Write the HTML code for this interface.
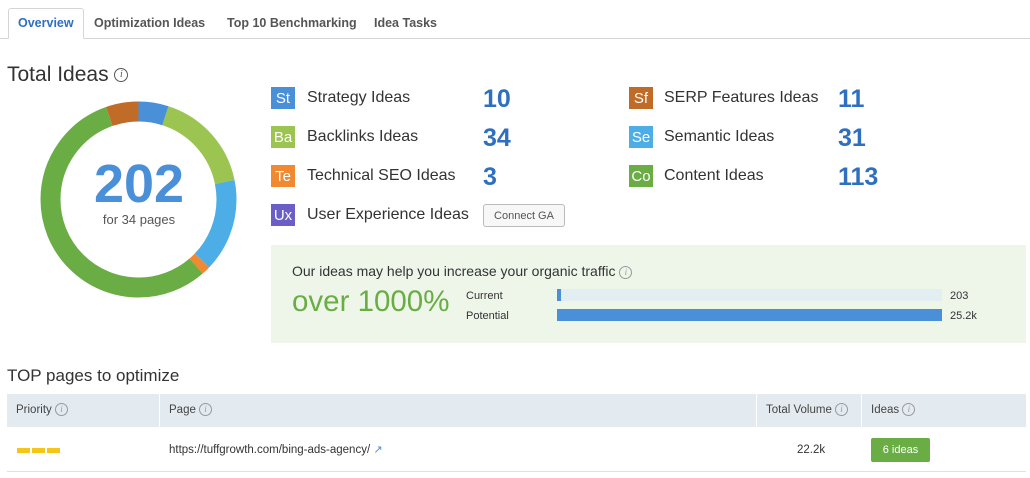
<!DOCTYPE html>
<html><head><meta charset="utf-8"><style>
*{margin:0;padding:0;box-sizing:border-box}
body{width:1030px;height:478px;background:#fff;font-family:"Liberation Sans","DejaVu Sans",sans-serif;color:#333;position:relative;overflow:hidden}
.a{position:absolute;white-space:nowrap}
.tab{position:absolute;top:8px;height:31px;line-height:30px;font-size:12.5px;color:#555;font-weight:bold}
.b{position:absolute;width:24px;height:22px;color:#fff;font-size:15px;line-height:23px;text-align:center}
.l{position:absolute;font-size:16px;color:#333;line-height:22px}
.n{position:absolute;font-size:25px;color:#2f6fc0;font-weight:bold;line-height:22px}
.i{display:inline-block;width:13px;height:13px;border:1px solid #999;border-radius:50%;font-size:9px;line-height:11px;text-align:center;color:#999;font-style:italic;font-family:"Liberation Serif",serif;vertical-align:middle}
.th{position:absolute;top:394px;height:33px;background:#e4ebf0;font-size:11.5px;color:#444;line-height:33px;padding-left:9px}
</style></head><body>
<div class="a" style="left:0;top:38px;width:1030px;height:1px;background:#d5d5d5"></div>
<div class="a" style="left:8px;top:8px;width:76px;height:31px;border:1px solid #d5d5d5;border-bottom:1px solid #fff;background:#fff;border-radius:3px 3px 0 0"></div>
<div class="tab" style="left:18px;color:#2f6fc0">Overview</div>
<div class="tab" style="left:94px">Optimization Ideas</div>
<div class="tab" style="left:227px">Top 10 Benchmarking</div>
<div class="tab" style="left:374px">Idea Tasks</div>

<div class="a" style="left:7px;top:63px;font-size:21px;color:#333">Total Ideas <span class="i" style="width:14px;height:14px;font-size:10px;line-height:12px;border-color:#555;color:#555">i</span></div>

<svg class="a" style="left:0;top:0" width="260" height="310">
<g transform="rotate(-90 138.5 199.5)" fill="none" stroke-width="20">
<circle cx="138.5" cy="199.5" r="88" stroke="#4a90d9" stroke-dasharray="27.4 600" stroke-dashoffset="0"/>
<circle cx="138.5" cy="199.5" r="88" stroke="#9bc550" stroke-dasharray="93.1 600" stroke-dashoffset="-27.4"/>
<circle cx="138.5" cy="199.5" r="88" stroke="#4dade6" stroke-dasharray="84.9 600" stroke-dashoffset="-120.5"/>
<circle cx="138.5" cy="199.5" r="88" stroke="#f0892f" stroke-dasharray="8.2 600" stroke-dashoffset="-205.4"/>
<circle cx="138.5" cy="199.5" r="88" stroke="#6aad45" stroke-dasharray="309.3 600" stroke-dashoffset="-213.6"/>
<circle cx="138.5" cy="199.5" r="88" stroke="#c06c28" stroke-dasharray="30.1 600" stroke-dashoffset="-522.9"/>
</g></svg>
<div class="a" style="left:88px;top:154px;width:102px;text-align:center;font-size:54px;color:#4a90d9;font-weight:bold;line-height:60px">202</div>
<div class="a" style="left:88px;top:212px;width:102px;text-align:center;font-size:13px;color:#555">for 34 pages</div>

<div class="b" style="left:271px;top:87px;background:#4a90d9">St</div><div class="l" style="left:307px;top:87px">Strategy Ideas</div><div class="n" style="left:483px;top:88px">10</div>
<div class="b" style="left:271px;top:126px;background:#9bc550">Ba</div><div class="l" style="left:307px;top:126px">Backlinks Ideas</div><div class="n" style="left:483px;top:127px">34</div>
<div class="b" style="left:271px;top:165px;background:#f0892f">Te</div><div class="l" style="left:307px;top:165px">Technical SEO Ideas</div><div class="n" style="left:483px;top:166px">3</div>
<div class="b" style="left:271px;top:204px;background:#6b5fc7">Ux</div><div class="l" style="left:307px;top:204px">User Experience Ideas</div>
<div class="a" style="left:483px;top:204px;width:82px;height:23px;border:1px solid #bbb;border-radius:3px;background:#f7f7f7;font-size:11px;color:#555;text-align:center;line-height:22px">Connect GA</div>
<div class="b" style="left:629px;top:87px;background:#c06c28">Sf</div><div class="l" style="left:664px;top:87px">SERP Features Ideas</div><div class="n" style="left:838px;top:88px">11</div>
<div class="b" style="left:629px;top:126px;background:#4dade6">Se</div><div class="l" style="left:664px;top:126px">Semantic Ideas</div><div class="n" style="left:838px;top:127px">31</div>
<div class="b" style="left:629px;top:165px;background:#6aad45">Co</div><div class="l" style="left:664px;top:165px">Content Ideas</div><div class="n" style="left:838px;top:166px">113</div>

<div class="a" style="left:271px;top:245px;width:755px;height:98px;background:#eef6ea"></div>
<div class="a" style="left:292px;top:263px;font-size:14px;color:#333">Our ideas may help you increase your organic traffic <span class="i">i</span></div>
<div class="a" style="left:292px;top:285px;font-size:29.5px;color:#6aad45">over 1000%</div>
<div class="a" style="left:466px;top:290px;font-size:11px;color:#333">Current</div>
<div class="a" style="left:466px;top:310px;font-size:11px;color:#333">Potential</div>
<div class="a" style="left:557px;top:289px;width:385px;height:12px;background:#e2eef2"></div>
<div class="a" style="left:557px;top:289px;width:4px;height:12px;background:#4a90d9"></div>
<div class="a" style="left:557px;top:309px;width:385px;height:12px;background:#4a90d9"></div>
<div class="a" style="left:950px;top:290px;font-size:11px;color:#333">203</div>
<div class="a" style="left:950px;top:310px;font-size:11px;color:#333">25.2k</div>

<div class="a" style="left:7px;top:366px;font-size:17px;color:#333">TOP pages to optimize</div>
<div class="th" style="left:7px;width:152px">Priority <span class="i">i</span></div>
<div class="th" style="left:160px;width:596px">Page <span class="i">i</span></div>
<div class="th" style="left:757px;width:104px">Total Volume <span class="i">i</span></div>
<div class="th" style="left:862px;width:164px">Ideas <span class="i">i</span></div>
<div class="a" style="left:17px;top:448px;width:43px;height:5px;background:repeating-linear-gradient(90deg,#f5c518 0 13px,transparent 13px 15px)"></div>
<div class="a" style="left:169px;top:443px;font-size:11.5px;color:#333">https://tuffgrowth.com/bing-ads-agency/ <span style="color:#4a90d9;font-size:11px">&#x2197;</span></div>
<div class="a" style="left:797px;top:444px;font-size:11.5px;color:#333">22.2k</div>
<div class="a" style="left:871px;top:438px;width:59px;height:24px;background:#6aad45;border-radius:2px;color:#fff;font-size:11px;text-align:center;line-height:24px">6 ideas</div>
<div class="a" style="left:7px;top:471px;width:1019px;height:1px;background:#e0e0e0"></div>
</body></html>
